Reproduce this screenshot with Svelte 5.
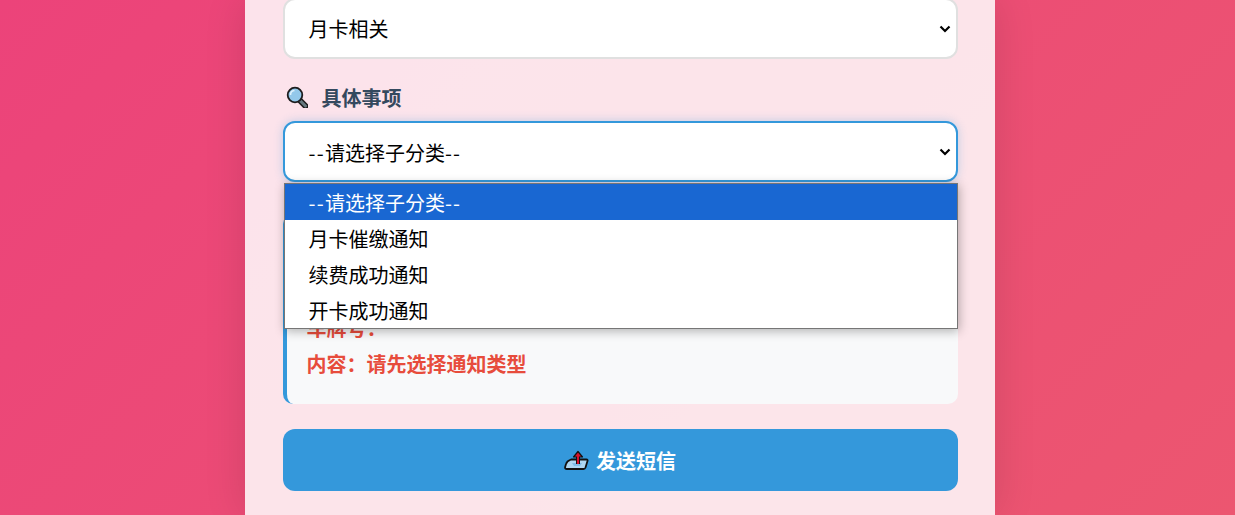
<script>
  const subOptions = ['月卡催缴通知', '续费成功通知', '开卡成功通知'];
</script>

<div class="page">
  <main class="card">
    <div class="field">
      <div class="select">
        <span>月卡相关</span>
        <svg class="chevron" viewBox="0 0 12 8"><path d="M1.5 1.5 6 6l4.5-4.5" /></svg>
      </div>
    </div>

    <div class="field">
      <div class="label">
        <svg class="icon" viewBox="0 0 22 22">
          <path d="M14 14.5 19.5 20" class="handle-edge" />
          <path d="M14 14.5 19.5 20" class="handle" />
          <circle cx="9" cy="9" r="7.3" fill="#93c8ea" stroke="#1c1c1c" stroke-width="1.8" />
          <path d="M4.5 9a4.5 4.5 0 0 1 4-4.5" fill="none" stroke="#dff1fc" stroke-width="1.6" />
        </svg>
        <span>具体事项</span>
      </div>
      <div class="select-wrap">
        <div class="select focused">
          <span><span class="dash">--</span>请选择子分类<span class="dash">--</span></span>
          <svg class="chevron" viewBox="0 0 12 8"><path d="M1.5 1.5 6 6l4.5-4.5" /></svg>
        </div>
        <ul class="menu">
          <li class="active"><span class="dash">--</span>请选择子分类<span class="dash">--</span></li>
          {#each subOptions as option}
            <li>{option}</li>
          {/each}
        </ul>
      </div>
    </div>

    <section class="preview">
      <p>车牌号：</p>
      <p>内容：请先选择通知类型</p>
    </section>

    <button class="send">
      <svg class="send-icon" viewBox="0 0 25 20">
        <path d="M7 9.500h15.500q1.500 0 1 1.500l-2 6.500q-.5 1.500-2 1.500H3q-2.500 0-1.800-2.300l.8-2.700q.8-3 5-4.500z" fill="#aed6f1" stroke="#111" stroke-width="1.800" stroke-linejoin="round" />
        <path d="M8 13h10l-2 3h-6z" fill="#7fbbe6" />
        <path d="M14 14V7" stroke="#111" stroke-width="4" />
        <path d="M9.500 7 14 1.500 18.500 7z" fill="#d8112c" stroke="#111" stroke-width="1.200" stroke-linejoin="round" />
        <path d="M14 14V6" stroke="#d8112c" stroke-width="2" />
      </svg>
      <span>发送短信</span>
    </button>
  </main>
</div>

<style>
  :global(body) {
    margin: 0;
    overflow: hidden;
    font-family: "Noto Sans CJK SC", "Noto Sans", sans-serif;
  }

  .page {
    box-sizing: border-box;
    height: 515px;
    padding-left: 5px;
    overflow: hidden;
    display: flex;
    justify-content: center;
    background: linear-gradient(135deg, #ec437a 0%, #ec5670 100%);
  }

  .card {
    width: 750px;
    height: 515px;
    box-sizing: border-box;
    padding: 0 37.5px;
    background: rgba(255, 255, 255, 0.85);
    box-shadow: 0 0 40px rgba(0, 0, 0, 0.12);
  }

  .field {
    margin-bottom: 26px;
  }

  .field:first-child {
    margin-top: -2px;
  }

  .label {
    display: flex;
    align-items: center;
    height: 24px;
    margin-bottom: 12px;
    font-size: 20px;
    font-weight: 700;
    color: #34495e;
  }

  .icon {
    width: 22px;
    height: 22px;
    margin: 0 14px 0 3px;
  }

  .handle-edge {
    stroke: #1c1c1c;
    stroke-width: 6;
    stroke-linecap: round;
  }

  .handle {
    stroke: #66797f;
    stroke-width: 3;
    stroke-linecap: round;
  }

  .select-wrap {
    position: relative;
  }

  .select {
    display: flex;
    align-items: center;
    justify-content: space-between;
    box-sizing: border-box;
    height: 61px;
    padding: 0 5px 0 24px;
    background: #fff;
    border: 2px solid #e0e0e0;
    border-radius: 12px;
    font-size: 20px;
    color: #000;
  }

  .select.focused {
    padding-top: 2px;
    border-color: #3498db;
    box-shadow: 0 0 10px rgba(52, 152, 219, 0.3);
  }

  .dash {
    letter-spacing: 1.25px;
  }

  .chevron {
    width: 12px;
    height: 8px;
    fill: none;
    stroke: #000;
    stroke-width: 2.2;
  }

  .focused .chevron {
    margin-top: -2px;
  }

  .menu {
    position: absolute;
    top: 62px;
    left: 1px;
    right: 0;
    z-index: 2;
    margin: 0;
    padding: 0;
    list-style: none;
    background: #fff;
    border: 1px solid #767676;
    box-shadow: 1px 2px 10px rgba(0, 0, 0, 0.3);
    font-size: 20px;
    color: #000;
  }

  .menu li {
    height: 36px;
    line-height: 38px;
    padding-left: 24px;
  }

  .menu li.active {
    background: #1967d2;
    color: #fff;
  }

  .preview {
    display: flex;
    flex-direction: column;
    justify-content: flex-end;
    box-sizing: border-box;
    height: 190px;
    margin: 32px 0 25px;
    padding: 0 20px 22px;
    background: #f8f9fa;
    border-left: 4px solid #3498db;
    border-radius: 10px;
    font-size: 20px;
    font-weight: 700;
    color: #e74c3c;
  }

  .preview p {
    margin: 0;
    height: 36px;
    line-height: 36px;
  }

  .send {
    display: flex;
    align-items: center;
    justify-content: center;
    gap: 7px;
    width: 100%;
    height: 62px;
    padding: 0;
    border: 0;
    border-radius: 12px;
    background: #3498db;
    color: #fff;
    font: inherit;
    font-size: 20px;
    font-weight: 700;
  }

  .send-icon {
    width: 25px;
    height: 20px;
  }
</style>
